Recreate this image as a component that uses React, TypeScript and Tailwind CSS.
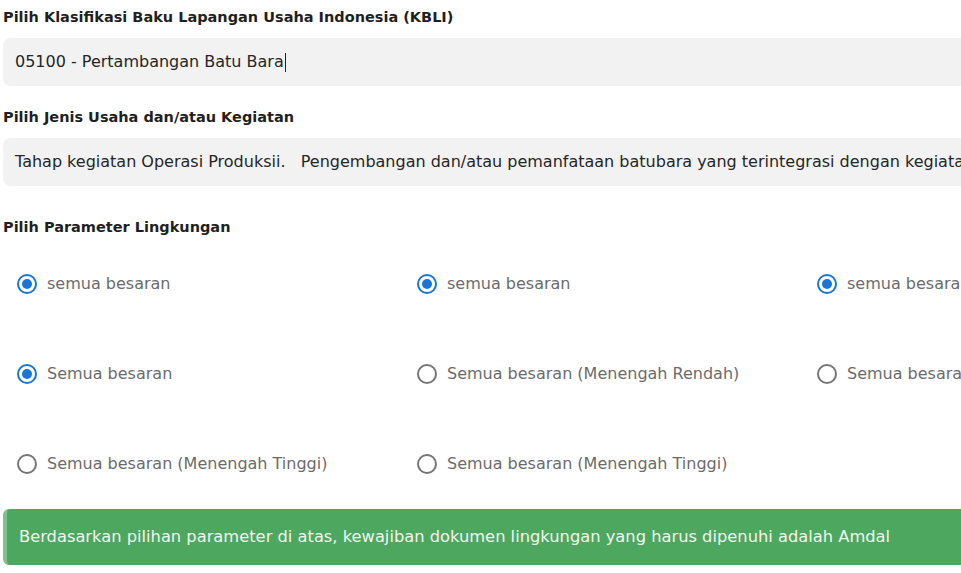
const font = { fontFamily: '"DejaVu Sans", "Noto Sans", sans-serif' };

type Option = { label: string; checked: boolean };

const rows: Option[][] = [
  [
    { label: 'semua besaran', checked: true },
    { label: 'semua besaran', checked: true },
    { label: 'semua besaran', checked: true },
  ],
  [
    { label: 'Semua besaran', checked: true },
    { label: 'Semua besaran (Menengah Rendah)', checked: false },
    { label: 'Semua besaran (Menengah Tinggi)', checked: false },
  ],
  [
    { label: 'Semua besaran (Menengah Tinggi)', checked: false },
    { label: 'Semua besaran (Menengah Tinggi)', checked: false },
  ],
];

function RadioItem({ label, checked }: Option) {
  return (
    <label className="flex items-center w-[400px] pl-[14px] gap-[10px] cursor-pointer">
      <span
        className={`flex items-center justify-center w-5 h-5 rounded-full border-2 ${
          checked ? 'border-[#1976d2]' : 'border-[#757575]'
        }`}
      >
        {checked && <span className="w-[10px] h-[10px] rounded-full bg-[#1976d2]" />}
      </span>
      <span className="text-[16px] text-[#6b6b6b] whitespace-nowrap">{label}</span>
    </label>
  );
}

function FieldLabel({ children }: { children: React.ReactNode }) {
  return <p className="text-[14.5px] leading-5 font-bold text-[#1f1f1f] whitespace-nowrap">{children}</p>;
}

export default function App() {
  return (
    <div className="w-screen h-[573px] overflow-hidden bg-white" style={font}>
      <div className="w-[1300px] pl-[3px] pt-[7px]">
        {/* KBLI */}
        <FieldLabel>Pilih Klasifikasi Baku Lapangan Usaha Indonesia (KBLI)</FieldLabel>
        <div className="mt-[11px] h-12 rounded-lg bg-[#f2f2f2] flex items-center px-3 text-[16px] text-[#262626] whitespace-nowrap">
          05100 - Pertambangan Batu Bara
          <span className="inline-block w-px h-[19px] bg-[#222] ml-px" />
        </div>

        {/* Jenis usaha */}
        <div className="mt-[21px]">
          <FieldLabel>Pilih Jenis Usaha dan/atau Kegiatan</FieldLabel>
        </div>
        <div className="mt-[11px] h-12 rounded-lg bg-[#f2f2f2] flex items-center px-3 text-[16px] text-[#262626] whitespace-pre">
          Tahap kegiatan Operasi Produksii.   Pengembangan dan/atau pemanfataan batubara yang terintegrasi dengan kegiatan pertambangan
        </div>

        {/* Parameter lingkungan */}
        <div className="mt-[31px]">
          <FieldLabel>Pilih Parameter Lingkungan</FieldLabel>
        </div>
        <div className="flex flex-col mt-[2px]">
          {rows.map((row, i) => (
            <div key={i} className="flex h-[90px] items-center">
              {row.map((opt, j) => (
                <RadioItem key={j} {...opt} />
              ))}
            </div>
          ))}
        </div>

        {/* Hasil */}
        <div className="h-14 rounded-md bg-[#4da75f] border-l-4 border-[#7dc18b] flex items-center pl-3 text-[16.3px] text-[#eef8ef] whitespace-nowrap">
          Berdasarkan pilihan parameter di atas, kewajiban dokumen lingkungan yang harus dipenuhi adalah Amdal
        </div>
      </div>
    </div>
  );
}
